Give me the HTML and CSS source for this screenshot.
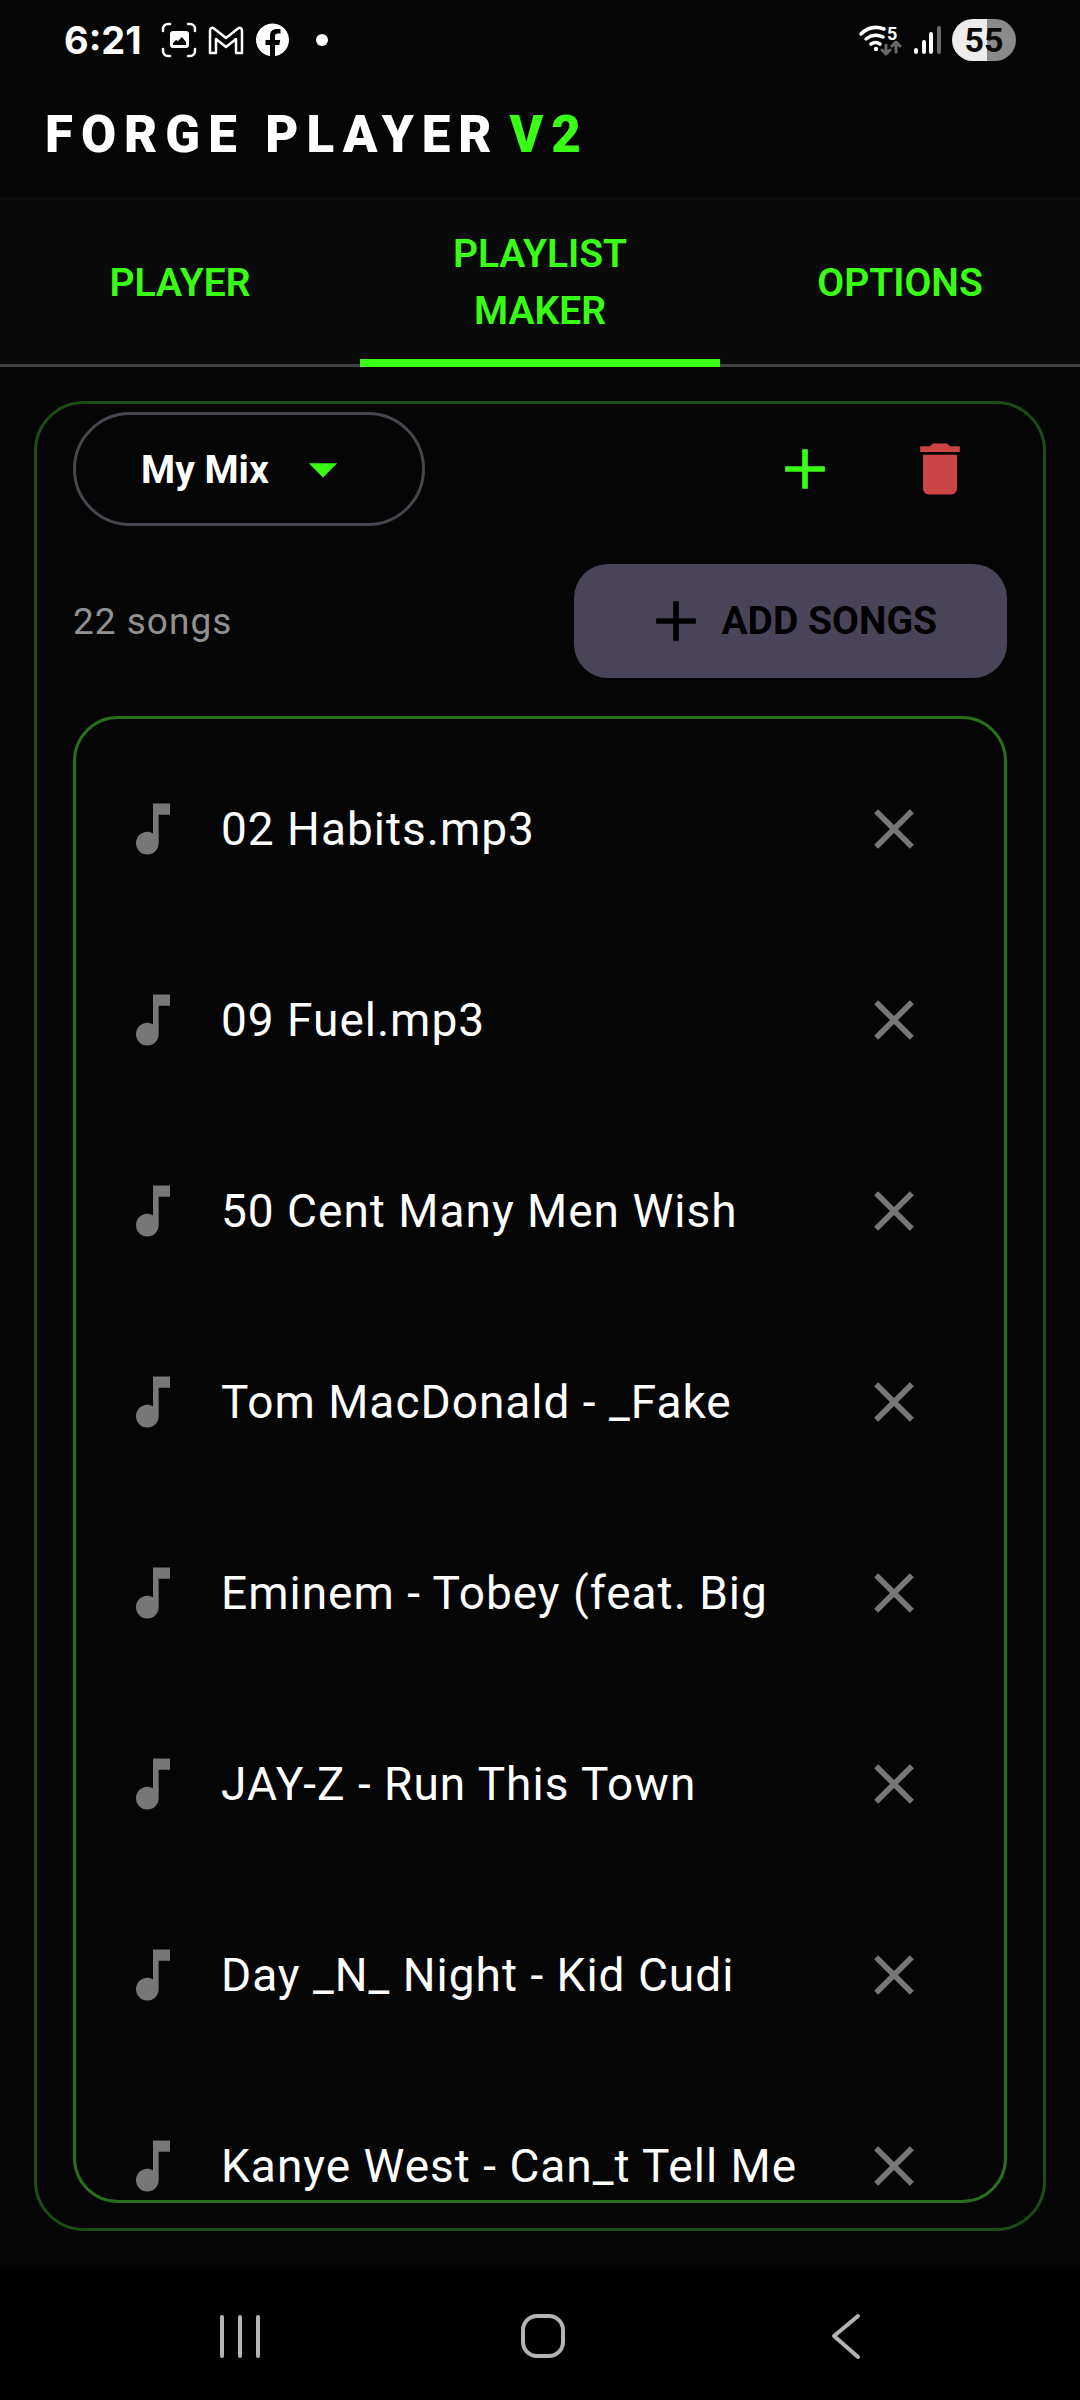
FILE: index.html
```html
<!DOCTYPE html>
<html lang="en">
<head>
<meta charset="utf-8">
<meta name="viewport" content="width=device-width, initial-scale=1">
<title>Forge Player V2</title>
<link rel="stylesheet" href="styles.css">
</head>
<body>
<svg class="sprite" aria-hidden="true">
  <symbol id="note" viewBox="0 0 24 24"><path d="M12 3v10.55c-.59-.34-1.27-.55-2-.55-2.21 0-4 1.79-4 4s1.79 4 4 4 4-1.79 4-4V7h4V3z"/></symbol>
  <symbol id="close" viewBox="0 0 24 24"><path d="M19 6.41 17.59 5 12 10.59 6.41 5 5 6.41 10.59 12 5 17.59 6.41 19 12 13.41 17.59 19 19 17.59 13.41 12z"/></symbol>
  <symbol id="plus" viewBox="0 0 24 24"><path d="M19 13h-6v6h-2v-6H5v-2h6V5h2v6h6z"/></symbol>
  <symbol id="trash" viewBox="0 0 24 24"><path d="M6 19c0 1.100.9 2 2 2h8c1.100 0 2-.9 2-2V7H6zM19 4h-3.500l-1-1h-5l-1 1H5v2h14z"/></symbol>
  <symbol id="drop" viewBox="0 0 24 24"><path d="m7 10 5 5 5-5z"/></symbol>
</svg>

<div class="app">
  <div class="status">
    <div class="status-side">
      <span class="clock">6:21</span>
      <svg class="status-icon" viewBox="0 0 36 36" fill="none" stroke="currentColor" stroke-width="2.500" stroke-linecap="round">
        <path d="M2 9V7a5 5 0 0 1 5-5h2M27 2h2a5 5 0 0 1 5 5v2M34 27v2a5 5 0 0 1-5 5h-2M9 34H7a5 5 0 0 1-5-5v-2"/>
        <path fill="currentColor" stroke="none" fill-rule="evenodd" d="M12 9h13a3 3 0 0 1 3 3v11a3 3 0 0 1-3 3H12a3 3 0 0 1-3-3V12a3 3 0 0 1 3-3zm0 14h13v-3l-4-5-4 4-2-1-3 3z"/>
      </svg>
      <svg class="status-icon" viewBox="0 0 36 36" fill="none" stroke="currentColor" stroke-width="2.500" stroke-linejoin="round">
        <path d="M2 31V9c0-3 2-4 4-2.500l12 9.500 12-9.500c2-1.500 4-.5 4 2.500v22h-6V17l-10 8-10-8v14z"/>
      </svg>
      <svg class="status-icon" viewBox="0 0 36 36">
        <path fill="currentColor" d="M15 34.200V23h-4.500v-5H15v-4c0-4.500 2.500-7 7-7h3.500v4.500H23c-2.200 0-3 1-3 3V18h5.200l-.9 5H20v11.200A16.500 16.500 0 1 0 15 34.200z"/>
      </svg>
      <span class="dot"></span>
    </div>
    <div class="status-side">
      <svg class="wifi" viewBox="0 0 44 36" fill="none" stroke="currentColor" stroke-linecap="round" stroke-width="3.500">
        <path d="M3 12C10 5 18 4 26 7M8 17c5-4 11-5 17-2M13 22c3-2 6-2 9 0"/>
        <circle cx="18" cy="27" r="2.200" fill="currentColor" stroke="none"/>
        <text x="29" y="18" class="wifi-band">5</text>
        <path stroke="#6a6a6a" stroke-width="3" stroke-linejoin="round" d="M28 23v9m-4-4 4 4 4-4M38 30v-10m-4 4 4-4 4 4"/>
      </svg>
      <svg class="signal" viewBox="0 0 28 30" fill="none" stroke="currentColor" stroke-linecap="round" stroke-width="4">
        <path d="M3 25v2M11 17v10M18 9v18"/><path stroke="#6a6a6a" d="M26 3v24"/>
      </svg>
      <span class="battery">55</span>
    </div>
  </div>

  <header class="brand">
    <h1 class="title">FORGE PLAYER<span class="version">V2</span></h1>
  </header>

  <nav class="tabs">
    <button class="tab" type="button">PLAYER</button>
    <button class="tab tab-active" type="button">PLAYLIST MAKER</button>
    <button class="tab" type="button">OPTIONS</button>
  </nav>

  <main class="panel">
    <div class="toolbar">
      <div class="picker">
        <select class="picker-select" aria-label="Playlist"><option>My Mix</option></select>
        <svg class="icon icon-green"><use href="#drop"/></svg>
      </div>
      <div class="actions">
        <button class="icon-button" type="button" aria-label="New playlist"><svg class="icon icon-green"><use href="#plus"/></svg></button>
        <button class="icon-button" type="button" aria-label="Delete playlist"><svg class="icon icon-red"><use href="#trash"/></svg></button>
      </div>
    </div>
    <div class="summary">
      <span class="count">22 songs</span>
      <button class="add" type="button"><svg class="icon"><use href="#plus"/></svg>ADD SONGS</button>
    </div>
    <ul class="songs">
      <li class="song"><svg class="icon icon-grey"><use href="#note"/></svg><span class="song-name">02 Habits.mp3</span><button class="icon-button" type="button" aria-label="Remove"><svg class="icon icon-grey"><use href="#close"/></svg></button></li>
      <li class="song"><svg class="icon icon-grey"><use href="#note"/></svg><span class="song-name">09 Fuel.mp3</span><button class="icon-button" type="button" aria-label="Remove"><svg class="icon icon-grey"><use href="#close"/></svg></button></li>
      <li class="song"><svg class="icon icon-grey"><use href="#note"/></svg><span class="song-name">50 Cent Many Men Wish</span><button class="icon-button" type="button" aria-label="Remove"><svg class="icon icon-grey"><use href="#close"/></svg></button></li>
      <li class="song"><svg class="icon icon-grey"><use href="#note"/></svg><span class="song-name">Tom MacDonald - _Fake</span><button class="icon-button" type="button" aria-label="Remove"><svg class="icon icon-grey"><use href="#close"/></svg></button></li>
      <li class="song"><svg class="icon icon-grey"><use href="#note"/></svg><span class="song-name">Eminem - Tobey (feat. Big</span><button class="icon-button" type="button" aria-label="Remove"><svg class="icon icon-grey"><use href="#close"/></svg></button></li>
      <li class="song"><svg class="icon icon-grey"><use href="#note"/></svg><span class="song-name">JAY-Z - Run This Town</span><button class="icon-button" type="button" aria-label="Remove"><svg class="icon icon-grey"><use href="#close"/></svg></button></li>
      <li class="song"><svg class="icon icon-grey"><use href="#note"/></svg><span class="song-name">Day _N_ Night - Kid Cudi</span><button class="icon-button" type="button" aria-label="Remove"><svg class="icon icon-grey"><use href="#close"/></svg></button></li>
      <li class="song"><svg class="icon icon-grey"><use href="#note"/></svg><span class="song-name">Kanye West - Can_t Tell Me</span><button class="icon-button" type="button" aria-label="Remove"><svg class="icon icon-grey"><use href="#close"/></svg></button></li>
    </ul>
  </main>

  <div class="system-nav">
    <button class="system-key" type="button" aria-label="Recents"><svg class="system-icon" viewBox="0 0 48 48"><path d="M6 5v39M24 5v39M42 5v39"/></svg></button>
    <button class="system-key" type="button" aria-label="Home"><svg class="system-icon" viewBox="0 0 48 48"><path d="M18 4h12a14 14 0 0 1 14 14v12a14 14 0 0 1-14 14H18A14 14 0 0 1 4 30V18A14 14 0 0 1 18 4z"/></svg></button>
    <button class="system-key" type="button" aria-label="Back"><svg class="system-icon" viewBox="0 0 48 48"><path d="M36 4 12 24l24 21"/></svg></button>
  </div>
</div>
</body>
</html>
```
FILE: styles.css
```css
* {
  box-sizing: border-box;
}

body {
  margin: 0;
  background: #050505;
  color: #fff;
  font-family: Roboto, sans-serif;
}

button,
select {
  margin: 0;
  padding: 0;
  border: 0;
  background: none;
  color: inherit;
  font: inherit;
}

.sprite {
  display: none;
}

.app {
  display: flex;
  flex-direction: column;
  height: 100vh;
}

/* System status bar */
.status {
  display: flex;
  justify-content: space-between;
  height: 80px;
  padding: 0 64px;
}

.status-side {
  display: flex;
  align-items: center;
  gap: 11px;
}

.clock {
  margin-right: 8px;
  font: 700 38px/48px Inter, sans-serif;
}

.status-icon {
  width: 36px;
  height: 36px;
}

.dot {
  width: 12px;
  height: 12px;
  margin-left: 14px;
  border-radius: 50%;
  background: #fff;
}

.wifi {
  width: 44px;
  height: 36px;
}

.wifi-band {
  fill: currentColor;
  stroke: none;
  font: 700 18px Roboto, sans-serif;
}

.signal {
  width: 28px;
  height: 30px;
}

.battery {
  width: 64px;
  border-radius: 21px;
  background: linear-gradient(90deg, #ececec 55%, #8a8a8a 55%);
  color: #0a0a0a;
  font-size: 34px;
  font-weight: 700;
  line-height: 42px;
  text-align: center;
}

/* App title */
.brand {
  padding: 23px 45px 30px;
}

.title {
  margin: 0;
  font-size: 51px;
  font-weight: 900;
  line-height: 64px;
  letter-spacing: 8px;
}

.version {
  margin-left: 10px;
  color: #39ff14;
}

/* Tabs */
.tabs {
  display: grid;
  grid-template-columns: repeat(3, 1fr);
  background: #0a0a0a;
  box-shadow: inset 0 -3px #434247;
}

.tab {
  height: 170px;
  padding: 2px 72px 0;
  color: #39ff14;
  font-size: 39px;
  font-weight: 600;
  line-height: 57px;
}

.tab-active {
  box-shadow: inset 0 -8px #39ff14;
}

/* Playlist panel */
.panel {
  display: flex;
  flex: 1;
  flex-direction: column;
  min-height: 0;
  margin: 34px;
  padding: 0 36px 25px;
  border: 3px solid #1c4d12;
  border-radius: 50px;
}

.toolbar,
.summary {
  display: flex;
  align-items: center;
  justify-content: space-between;
}

.toolbar {
  height: 130px;
}

.picker {
  display: flex;
  align-items: center;
  gap: 20px;
  height: 114px;
  padding: 0 65px;
  border: 3px solid #49454f;
  border-radius: 57px;
}

.picker-select {
  appearance: none;
  padding-top: 2px;
  font-size: 39px;
  font-weight: 700;
  line-height: 56px;
}

.icon {
  width: 68px;
  height: 68px;
  fill: currentColor;
}

.icon-green {
  color: #39ff14;
}

.icon-red {
  color: #cc4444;
}

.icon-grey {
  flex: none;
  color: #777;
}

.actions {
  display: flex;
}

.icon-button {
  display: grid;
  place-items: center;
  width: 135px;
  height: 135px;
}

.summary {
  padding: 30px 0 38px;
}

.count {
  color: #919191;
  font-size: 37px;
  letter-spacing: 1px;
}

.add {
  display: flex;
  align-items: center;
  gap: 11px;
  height: 114px;
  padding: 0 70px 0 68px;
  border-radius: 34px;
  background: #4a4458;
  color: #000;
  font-size: 39px;
  font-weight: 700;
}

.songs {
  flex: 1;
  min-height: 0;
  margin: 0;
  padding: 14px 43px;
  overflow: hidden;
  border: 3px solid #267119;
  border-radius: 45px;
  list-style: none;
}

.song {
  display: flex;
  align-items: center;
  height: 191px;
}

.song-name {
  flex: 1;
  margin-left: 34px;
  font-size: 46px;
  letter-spacing: 1px;
  white-space: nowrap;
}

/* System navigation keys */
.system-nav {
  display: flex;
  justify-content: center;
  gap: 168px;
  height: 135px;
  padding: 6px 0 0 6px;
  background: #010101;
}

.system-key {
  display: grid;
  place-items: center;
  width: 135px;
}

.system-icon {
  width: 48px;
  height: 48px;
  fill: none;
  stroke: #b4b4b4;
  stroke-width: 4;
  stroke-linecap: round;
  stroke-linejoin: round;
}
```
